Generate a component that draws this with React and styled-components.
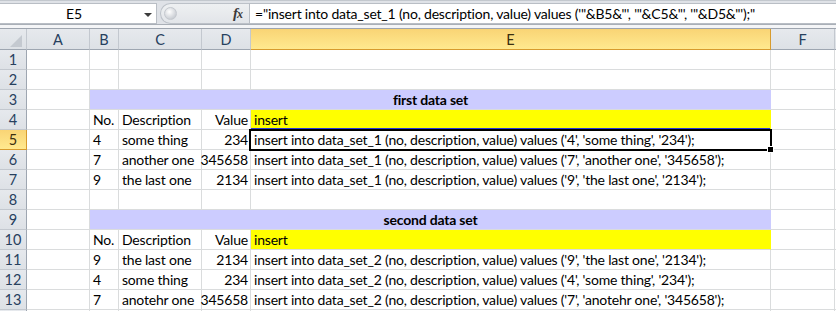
import React from "react";
import styled, { createGlobalStyle } from "styled-components";

const GlobalStyle = createGlobalStyle`
  html, body { margin: 0; padding: 0; background: #fff; }
  body {
    font-family: Lato, "Liberation Sans", sans-serif;
    font-size: 14px;
    letter-spacing: -0.2px;
    color: #000;
  }
`;

const Window = styled.div`
  width: 836px;
  height: 311px;
  overflow: hidden;
  background: #fff;
`;

/* ---------- formula bar ---------- */

const FormulaBar = styled.div`
  display: flex;
  height: 21px;
  padding-top: 2px;
  background: #dfe2e7;
  border-top: 1px solid #c3c8ce;
  border-bottom: 1px solid #a9afb7;
`;

const NameBox = styled.div`
  box-sizing: border-box;
  width: 157px;
  display: flex;
  align-items: center;
  background: #fff;
  border: 1px solid #b9bec5;
  border-left: none;
`;

const NameText = styled.span`
  flex: 1;
  text-align: center;
  line-height: 19px;
  padding-left: 4px;
`;

const DropArrow = styled.span`
  width: 0;
  height: 0;
  margin: 2px 4px 0 0;
  border-left: 4px solid transparent;
  border-right: 4px solid transparent;
  border-top: 4px solid #3c3c3c;
`;

const GripArea = styled.div`
  width: 89px;
  display: flex;
  padding-left: 3px;
`;

const Pill = styled.div`
  box-sizing: border-box;
  flex: 1;
  display: flex;
  align-items: center;
  justify-content: space-between;
  padding: 0 7px 0 3px;
  border: 1px solid #bcc1c8;
  border-right: none;
  border-radius: 11px 0 0 11px;
  background: linear-gradient(#eef0f2, #e2e5e9);
`;

const Knob = styled.span`
  width: 11px;
  height: 11px;
  border-radius: 50%;
  background: radial-gradient(circle at 40% 35%, #ffffff, #c9cdd3 75%);
  border: 1px solid #c4c8ce;
`;

const Fx = styled.span`
  font-family: "Liberation Serif", "DejaVu Serif", serif;
  font-style: italic;
  font-weight: 700;
  font-size: 15px;
  color: #3a3a3a;
  letter-spacing: -1px;

  small {
    font-size: 12px;
  }
`;

const FormulaInput = styled.div`
  box-sizing: border-box;
  flex: 1;
  background: #fff;
  border: 1px solid #b9bec5;
  border-right: none;
  padding-left: 5px;
  line-height: 19px;
  white-space: nowrap;
`;

const Strip = styled.div`
  height: 3px;
  background: #f4f5f7;
  border-bottom: 1px solid #9ea5af;
`;

/* ---------- sheet ---------- */

const Sheet = styled.div`
  display: grid;
  grid-template-columns: 27px 63px 29px 83px 49px 520px 64px 1fr;
  grid-template-rows: 21px;
  grid-auto-rows: 20px;
`;

const HeadCell = styled.div`
  box-sizing: border-box;
  display: flex;
  align-items: flex-end;
  justify-content: center;
  line-height: 19px;
  font-size: 14.5px;
  letter-spacing: 0;
  color: ${(p) => (p.$active ? "#3b2f10" : "#27405e")};
  background: ${(p) =>
    p.$active
      ? "linear-gradient(#f9d475, #ffe98f)"
      : "linear-gradient(#e6e9ed, #dde1e6)"};
  border-right: 1px solid ${(p) => (p.$active ? "#d79b2e" : p.$rowHead ? "#9ea6b1" : "#c3c8cf")};
  border-bottom: 1px solid ${(p) => (p.$active ? "#d79b2e" : p.$rowHead ? "#c3c8cf" : "#9ea6b1")};
`;

const Corner = styled(HeadCell)`
  justify-content: flex-end;
  padding: 0 4px 2px 0;
`;

const CornerTriangle = styled.span`
  width: 0;
  height: 0;
  border-left: 12px solid transparent;
  border-bottom: 12px solid #c4c9d0;
`;

const Cell = styled.div`
  box-sizing: border-box;
  position: relative;
  grid-column: span ${(p) => p.$span || 1};
  display: flex;
  justify-content: ${(p) =>
    p.$align === "right" ? "flex-end" : p.$align === "center" ? "center" : "flex-start"};
  padding: 0 2px 0 3px;
  line-height: 19px;
  white-space: nowrap;
  font-weight: ${(p) => (p.$bold ? 700 : 400)};
  background: ${(p) => p.$fill || "#fff"};
  border-right: 1px solid ${(p) => p.$fill || "#dadcdd"};
  border-bottom: 1px solid #dadcdd;
  box-shadow: ${(p) => (p.$mark ? "inset 0 -1px 0 #2d3bd6" : "none")};
  z-index: ${(p) => (p.$selected ? 2 : "auto")};

  ${(p) =>
    p.$selected &&
    `
    &::before {
      content: "";
      position: absolute;
      top: -1px;
      left: -2px;
      right: -2px;
      bottom: -2px;
      border: 2px solid #000;
      pointer-events: none;
    }
    &::after {
      content: "";
      position: absolute;
      right: -3px;
      bottom: -3px;
      width: 5px;
      height: 5px;
      background: #000;
      box-shadow: 0 0 0 1px #fff;
    }
  `}
`;

const BLUE = "#ccccff";
const YELLOW = "#ffff00";
const COLUMNS = ["A", "B", "C", "D", "E", "F"];

const sql = (set, no, desc, val) =>
  `insert into data_set_${set} (no, description, value) values ('${no}', '${desc}', '${val}');`;

const rows = [
  { type: "blank" },
  { type: "blank" },
  { type: "title", text: "first data set" },
  { type: "head", mark: true },
  { type: "data", set: 1, no: "4", desc: "some thing", val: "234", selected: true },
  { type: "data", set: 1, no: "7", desc: "another one", val: "345658" },
  { type: "data", set: 1, no: "9", desc: "the last one", val: "2134" },
  { type: "blank" },
  { type: "title", text: "second data set" },
  { type: "head" },
  { type: "data", set: 2, no: "9", desc: "the last one", val: "2134" },
  { type: "data", set: 2, no: "4", desc: "some thing", val: "234" },
  { type: "data", set: 2, no: "7", desc: "anotehr one", val: "345658" },
];

function RowCells({ row }) {
  if (row.type === "title") {
    return (
      <Cell $span={4} $fill={BLUE} $bold $align="center">
        {row.text}
      </Cell>
    );
  }
  if (row.type === "head") {
    return (
      <>
        <Cell>No.</Cell>
        <Cell>Description</Cell>
        <Cell $align="right">Value</Cell>
        <Cell $fill={YELLOW} $mark={row.mark}>
          insert
        </Cell>
      </>
    );
  }
  if (row.type === "data") {
    return (
      <>
        <Cell>{row.no}</Cell>
        <Cell>{row.desc}</Cell>
        <Cell $align="right">{row.val}</Cell>
        <Cell $selected={row.selected}>{sql(row.set, row.no, row.desc, row.val)}</Cell>
      </>
    );
  }
  return (
    <>
      <Cell />
      <Cell />
      <Cell />
      <Cell />
    </>
  );
}

export default function App() {
  return (
    <Window>
      <GlobalStyle />
      <FormulaBar>
        <NameBox>
          <NameText>E5</NameText>
          <DropArrow />
        </NameBox>
        <GripArea>
          <Pill>
            <Knob />
            <Fx>
              f<small>x</small>
            </Fx>
          </Pill>
        </GripArea>
        <FormulaInput>
          {`="insert into data_set_1 (no, description, value) values ('"&B5&"', '"&C5&"', '"&D5&"');"`}
        </FormulaInput>
      </FormulaBar>
      <Strip />

      <Sheet>
        <Corner>
          <CornerTriangle />
        </Corner>
        {COLUMNS.map((c) => (
          <HeadCell key={c} $active={c === "E"}>
            {c}
          </HeadCell>
        ))}
        <HeadCell />

        {rows.map((row, i) => (
          <React.Fragment key={i}>
            <HeadCell $rowHead $active={row.selected}>
              {i + 1}
            </HeadCell>
            <Cell />
            <RowCells row={row} />
            <Cell />
            <Cell />
          </React.Fragment>
        ))}
        <HeadCell $rowHead />
        {[0, 1, 2, 3, 4, 5, 6].map((k) => (
          <Cell key={k} />
        ))}
      </Sheet>
    </Window>
  );
}
